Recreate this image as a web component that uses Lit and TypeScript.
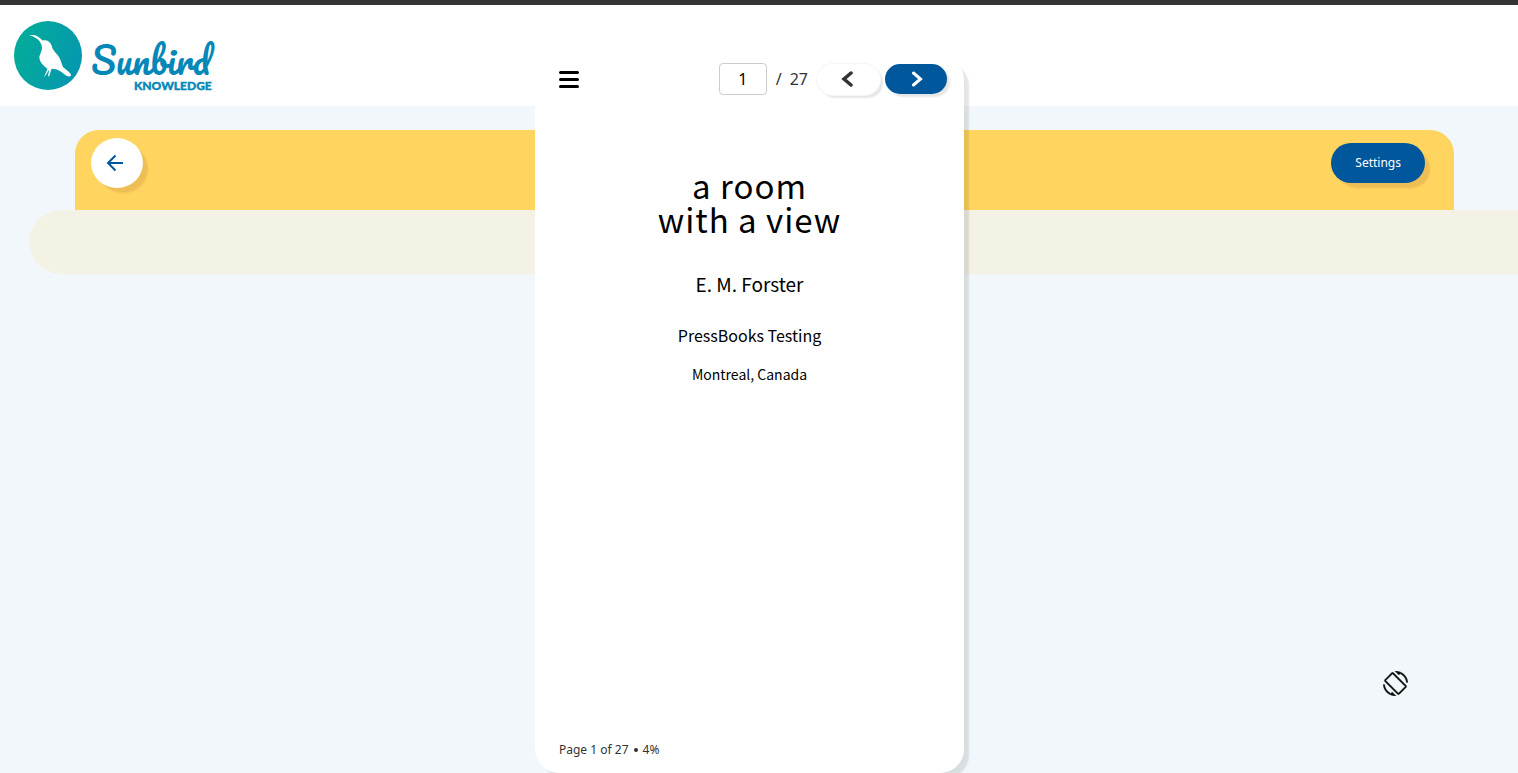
import { LitElement, html, css } from "lit";
import { customElement, state } from "lit/decorators.js";

@customElement("app-root")
export class AppRoot extends LitElement {
  static styles = css`
    * {
      box-sizing: border-box;
    }
    :host {
      display: block;
      position: relative;
      min-height: 100vh;
      overflow: hidden;
      background: #f1f7fa;
      color: #333;
      font-family: "Noto Sans", sans-serif;
      font-size: 12px;
      line-height: 16px;
    }
    button {
      border: 0;
      padding: 0;
      font: inherit;
      cursor: pointer;
      display: inline-flex;
      align-items: center;
      justify-content: center;
    }
    svg {
      display: block;
    }
    .header {
      border-top: 5px solid #333;
      background: #fff;
      padding: 15px 14px 15px;
    }
    .logo {
      width: 204px;
      overflow: visible;
    }
    .script {
      font: 400 36px "Pacifico", "Lobster", cursive;
    }
    .caps {
      font: 900 12px Lato, sans-serif;
      stroke: #0588b7;
      stroke-width: 0.4;
    }
    .main {
      padding-top: 24px;
    }
    .toolbar {
      display: flex;
      align-items: center;
      justify-content: space-between;
      height: 80px;
      margin: 0 64px 0 75px;
      padding: 0 29px 14px 16px;
      border-radius: 24px 24px 0 0;
      background: #ffd45f;
    }
    .back {
      width: 52px;
      height: 50px;
      padding-right: 4px;
      border-radius: 50%;
      background: #fff;
      color: #00579c;
      box-shadow: 6px 6px 2px -1px rgba(110, 30, 20, 0.12);
    }
    .settings {
      height: 40px;
      padding: 0 24px;
      border-radius: 24px;
      background: #00579c;
      color: #fff;
      box-shadow: 6px 6px 2px -1px rgba(110, 30, 20, 0.12);
    }
    .strip {
      height: 64px;
      margin-left: 29px;
      border-radius: 32px 0 0 32px;
      background: #f4f1e5;
    }
    .rotate {
      position: absolute;
      right: 110px;
      bottom: 77px;
      background: none;
      color: #111;
    }
    .overlay {
      position: absolute;
      inset: 0;
      display: flex;
      justify-content: center;
      padding: 56px 19px 0 0;
      pointer-events: none;
    }
    .player {
      pointer-events: auto;
      display: flex;
      flex-direction: column;
      width: 429px;
      border-radius: 24px;
      background: #fff;
      box-shadow: 6px 6px 2px -1px rgba(0, 0, 0, 0.1);
    }
    .controls {
      display: flex;
      align-items: center;
      justify-content: space-between;
      padding: 7px 17px 0 24px;
    }
    .menu {
      background: none;
      color: #000;
    }
    .pager {
      display: flex;
      align-items: center;
      font-size: 16px;
      line-height: 24px;
    }
    .page {
      width: 48px;
      height: 32px;
      margin-right: 9px;
      padding: 0;
      border: 1px solid #ccc;
      border-radius: 4px;
      background: #fff;
      color: #000;
      font: inherit;
      text-align: center;
    }
    .total {
      margin: 0 9px 0 8px;
    }
    .nav {
      width: 63px;
      height: 31px;
      padding-right: 4px;
      border-radius: 16px;
      background: #fff;
      color: #333;
      box-shadow: 0 0 0 1px #f6f6f6, 3px 3px 2px rgba(0, 0, 0, 0.1);
    }
    .next {
      width: 62px;
      height: 30px;
      margin-left: 5px;
      padding: 0 0 0 2px;
      background: #00579c;
      color: #fff;
      box-shadow: 3px 3px 2px rgba(0, 0, 0, 0.1);
    }
    .book {
      flex: 1;
      padding-top: 73px;
      color: #000;
      font-family: "Noto Sans CJK SC", sans-serif;
      text-align: center;
    }
    h1,
    h2,
    p {
      margin: 0;
      font-weight: 400;
    }
    h1 {
      font-size: 33px;
      line-height: 34px;
      letter-spacing: 1px;
    }
    h2 {
      margin-top: 33px;
      font-size: 19px;
      line-height: 30px;
    }
    .press {
      margin-top: 24px;
      font-size: 16px;
      line-height: 24px;
    }
    .city {
      margin-top: 17px;
      font-size: 14px;
      line-height: 20px;
    }
    .status {
      display: flex;
      align-items: center;
      gap: 5px;
      padding: 0 24px 15px;
    }
    .dot {
      width: 4px;
      height: 4px;
      border-radius: 50%;
      background: #333;
    }
  `;

  @state() private page = 1;
  private readonly pages = 27;

  private go(page: number) {
    this.page = Math.min(this.pages, Math.max(1, page || 1));
  }

  render() {
    return html`
      <header class="header">
        <svg class="logo" viewBox="0 0 204 71" height="71" role="img" aria-label="Sunbird Knowledge">
          <defs>
            <linearGradient id="disc" x1="0" y1="0.3" x2="1" y2="0.7">
              <stop offset="0.1" stop-color="#03ab9b" />
              <stop offset="1" stop-color="#0596b0" />
            </linearGradient>
          </defs>
          <ellipse cx="34" cy="35.500" rx="34" ry="34.500" fill="url(#disc)" />
          <path
            fill="#fff"
            d="M15.500 15.300C20 14 25 16 28.500 20.500C33 19.800 36.500 21.500 37.800 26C38 29 41 32 44 35.500C47 39.500 47.300 43.500 49 47C51.500 49.500 55 51 57 54.500C57.500 56.500 55 57 53 56C49.500 54.500 46 50 42 49.300L37.500 48.800L35.300 56L34 56.500L35.200 49.500L31.500 55.500L30 57L33.500 49C30 46 26 43 25.500 38.500C24.800 35 28 32 28 27.500C27.800 22.500 23 17 15.500 15.300Z"
          />
          <text class="script" x="77" y="55" fill="#0588b7">Sunbird</text>
          <text class="caps" x="120" y="70" fill="#0588b7">KNOWLEDGE</text>
        </svg>
      </header>

      <main class="main">
        <div class="toolbar">
          <button class="back" aria-label="Back">
            <svg width="20" height="20" viewBox="0 0 20 20" fill="none" stroke="currentColor" stroke-width="2">
              <path d="M18 10H3M10.500 2.500L3 10L10.500 17.500" />
            </svg>
          </button>
          <button class="settings">Settings</button>
        </div>
        <div class="strip"></div>
      </main>

      <button class="rotate" aria-label="Rotate screen">
        <svg width="25" height="25" viewBox="0 0 24 24" fill="currentColor" stroke="currentColor" stroke-width="0.3">
          <path
            d="M16.480 2.520c3.270 1.550 5.610 4.720 5.970 8.480h1.500C23.440 4.840 18.290 0 12 0l-.660.030 3.810 3.810 1.330-1.320zm-6.250-.770c-.590-.590-1.540-.590-2.120 0L1.750 8.110c-.590.590-.590 1.540 0 2.120l12.020 12.020c.590.590 1.540.590 2.120 0l6.360-6.360c.590-.590.590-1.540 0-2.120L10.230 1.750zm4.600 19.440L2.810 9.170l6.360-6.360 12.020 12.020-6.360 6.360zm-7.310.290C4.250 19.940 1.910 16.760 1.550 13H.050C.560 19.160 5.710 24 12 24l.660-.030-3.810-3.810-1.330 1.320z"
          />
        </svg>
      </button>

      <div class="overlay">
        <section class="player" aria-label="Book reader">
          <div class="controls">
            <button class="menu" aria-label="Menu">
              <svg width="20" height="18" viewBox="0 0 20 18" stroke="currentColor" stroke-width="3" stroke-linecap="round">
                <path d="M1.500 2.500H18.500M1.500 9.500H18.500M1.500 16.500H18.500" />
              </svg>
            </button>
            <div class="pager">
              <input
                class="page"
                aria-label="Page number"
                .value=${String(this.page)}
                @change=${(e: Event) => this.go(Number((e.target as HTMLInputElement).value))}
              />
              <span>/</span>
              <span class="total">${this.pages}</span>
              <button class="nav" aria-label="Previous page" @click=${() => this.go(this.page - 1)}>
                <svg width="16" height="16" viewBox="0 0 16 16" fill="none" stroke="currentColor" stroke-width="3.500" stroke-linecap="round">
                  <path d="M12 2L5 8L12 14" />
                </svg>
              </button>
              <button class="nav next" aria-label="Next page" @click=${() => this.go(this.page + 1)}>
                <svg width="16" height="16" viewBox="0 0 16 16" fill="none" stroke="currentColor" stroke-width="3" stroke-linecap="round">
                  <path d="M4.500 2L11.500 8L4.500 14" />
                </svg>
              </button>
            </div>
          </div>
          <article class="book">
            <h1>a room<br />with a view</h1>
            <h2>E. M. Forster</h2>
            <p class="press">PressBooks Testing</p>
            <p class="city">Montreal, Canada</p>
          </article>
          <footer class="status">
            <span>Page ${this.page} of ${this.pages}</span>
            <span class="dot"></span>
            <span>${Math.round((this.page / this.pages) * 100)}%</span>
          </footer>
        </section>
      </div>
    `;
  }
}
